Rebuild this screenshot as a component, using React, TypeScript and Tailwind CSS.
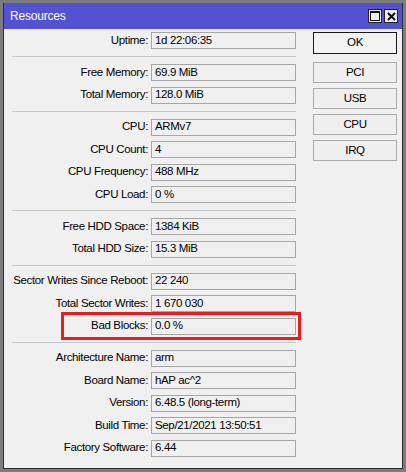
import React from "react";

type Field = { label: string; value: string; flagged?: boolean };

const groups: Field[][] = [
  [{ label: "Uptime", value: "1d 22:06:35" }],
  [
    { label: "Free Memory", value: "69.9 MiB" },
    { label: "Total Memory", value: "128.0 MiB" },
  ],
  [
    { label: "CPU", value: "ARMv7" },
    { label: "CPU Count", value: "4" },
    { label: "CPU Frequency", value: "488 MHz" },
    { label: "CPU Load", value: "0 %" },
  ],
  [
    { label: "Free HDD Space", value: "1384 KiB" },
    { label: "Total HDD Size", value: "15.3 MiB" },
  ],
  [
    { label: "Sector Writes Since Reboot", value: "22 240" },
    { label: "Total Sector Writes", value: "1 670 030" },
    { label: "Bad Blocks", value: "0.0 %", flagged: true },
  ],
  [
    { label: "Architecture Name", value: "arm" },
    { label: "Board Name", value: "hAP ac^2" },
    { label: "Version", value: "6.48.5 (long-term)" },
    { label: "Build Time", value: "Sep/21/2021 13:50:51" },
    { label: "Factory Software", value: "6.44" },
  ],
];

const sideButtons = ["PCI", "USB", "CPU", "IRQ"];

function FieldRow({ label, value, flagged }: Field) {
  return (
    <div className="relative grid grid-cols-[136px_145px] gap-x-[3px] h-[17px] items-center">
      <span className="text-right whitespace-nowrap leading-none justify-self-end">{label}:</span>
      <div className="h-[17px] border border-[#a6a6a6] bg-[#f0f0f0] pl-[3px] flex items-center whitespace-nowrap leading-none">
        {value}
      </div>
      {flagged && (
        <div className="absolute left-[49px] -right-[5px] -top-[6px] -bottom-[5px] border-[3px] border-[#e41e1e] pointer-events-none" />
      )}
    </div>
  );
}

function TitleButton({ children }: { children: React.ReactNode }) {
  return (
    <div className="w-[14px] h-[14px] bg-[#ececec] border border-[#222] flex items-center justify-center">
      {children}
    </div>
  );
}

export default function App() {
  return (
    <div
      className="w-[406px] h-[472px] bg-[#7d7d7d] p-[3px] text-[11.5px] tracking-[-0.35px] text-black"
      style={{ fontFamily: '"Liberation Sans", Arial, sans-serif' }}
    >
      <div className="flex flex-col h-full border-x border-b border-[#2e2e2e]">
        <div className="h-[26px] bg-[#5252d2] flex items-center justify-between pl-[6px] pr-[4px]">
          <span className="text-white text-[12px] tracking-[-0.2px]">Resources</span>
          <div className="flex gap-[2px]">
            <TitleButton>
              <svg width="10" height="10" viewBox="0 0 10 10">
                <rect x="0.5" y="0.5" width="9" height="9" fill="none" stroke="#111" />
                <rect x="0" y="0" width="10" height="2" fill="#111" />
              </svg>
            </TitleButton>
            <TitleButton>
              <svg width="9" height="9" viewBox="0 0 9 9">
                <path d="M1 1L8 8M8 1L1 8" stroke="#111" strokeWidth="2" />
              </svg>
            </TitleButton>
          </div>
        </div>

        <div className="flex-1 bg-[#f0f0f0] flex">
          <div className="ml-[8px] w-[284px] pt-[3px] flex flex-col">
            {groups.map((rows, i) => (
              <React.Fragment key={i}>
                {i > 0 && <div className="my-[7px] h-px bg-[#c6c6c6]" />}
                <div className="flex flex-col gap-[5.5px]">
                  {rows.map((f) => (
                    <FieldRow key={f.label} {...f} />
                  ))}
                </div>
              </React.Fragment>
            ))}
          </div>

          <div className="ml-[17px] w-[84px] pt-[3px] flex flex-col">
            <button className="h-[22px] border border-[#1a1a1a] bg-[#f3f3f3] mb-[8px]">
              OK
            </button>
            <div className="flex flex-col gap-[5px]">
              {sideButtons.map((b) => (
                <button
                  key={b}
                  className="h-[21px] border border-[#ababab] bg-[#efefef]"
                >
                  {b}
                </button>
              ))}
            </div>
          </div>
        </div>
      </div>
    </div>
  );
}
